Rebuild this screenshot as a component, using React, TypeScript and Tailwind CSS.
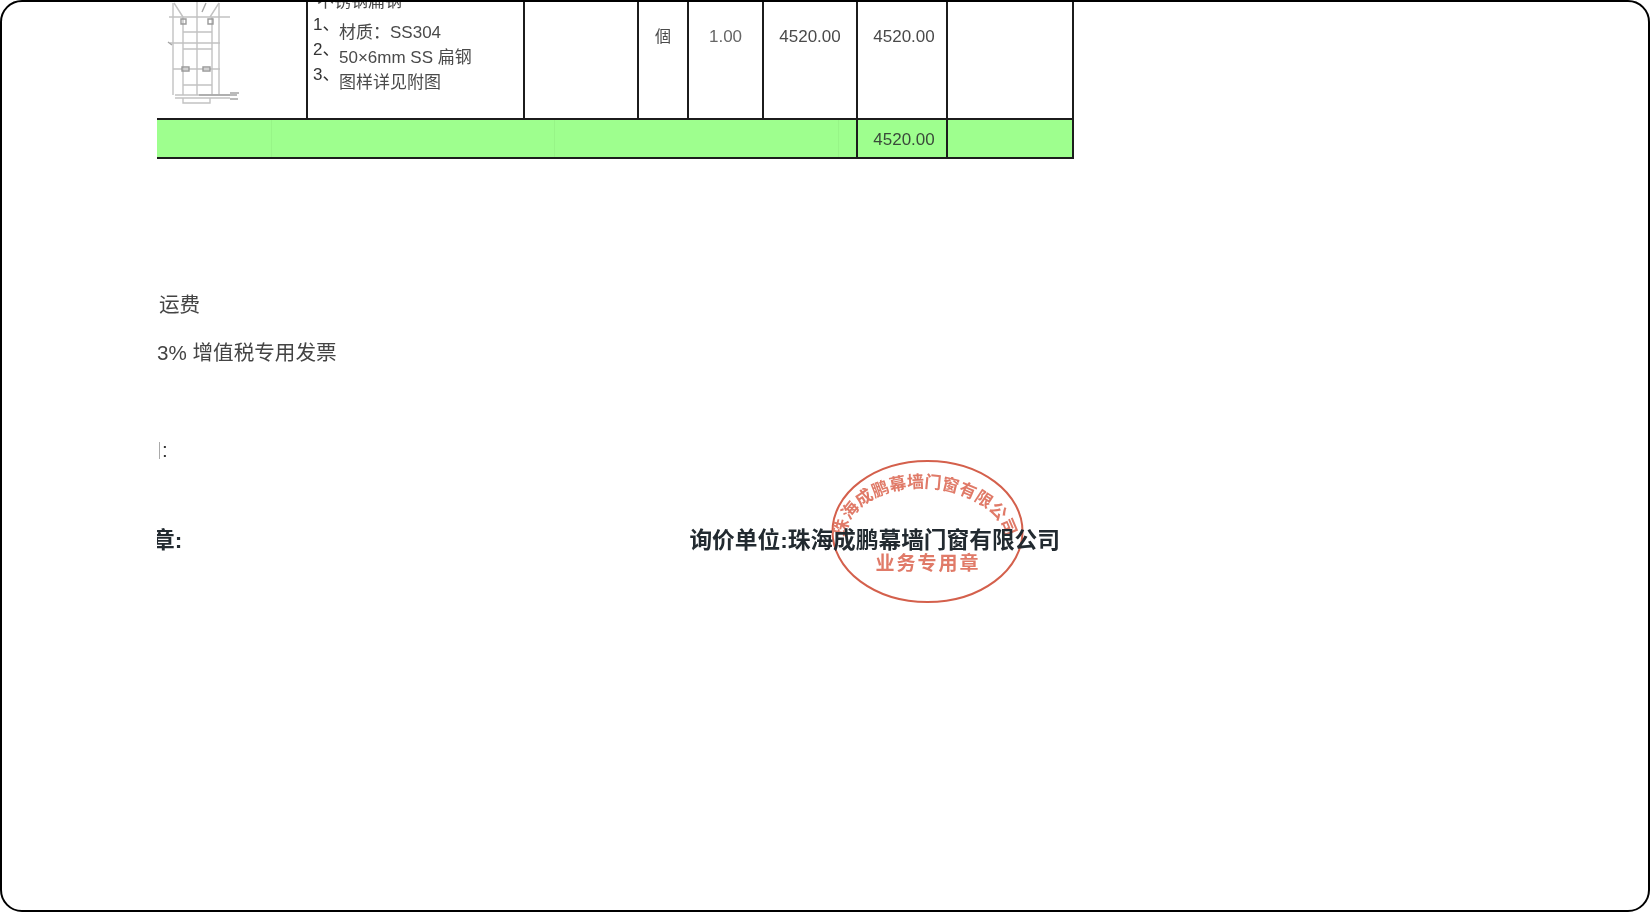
import React from 'react';

const FONT = '[font-family:"Liberation_Sans","Noto_Sans_CJK_SC",sans-serif]';

const specs = ['材质：SS304', '50×6mm SS 扁钢', '图样详见附图'];

// the ladder drawing in the first cell of the quote
const LadderDrawing = () => (
  <svg width="140" height="112" viewBox="0 0 140 112" fill="none" stroke="#c2c2c2" strokeWidth="1.4" className="blur-[0.6px]">
    <path d="M10 17H71M11 43H61M14 69H61M16 95H71M16 98H71M24 98V103H51V98" />
    <path d="M14 3V95M24 17V95M38 0V95M53 17V95M60 3V95" />
    <path d="M15 3L24 17M60 3L51 17M24 32H53M24 49H53M24 85H53" />
    <path d="M22 19H27V24H22ZM49 19H54V24H49ZM23 67H30V71H23ZM44 67H51V71H44Z" stroke="#9a9a9a" />
    <path d="M40 95H78M71 93H80M71 99H79M9 42L13 45M43 12L47 3" stroke="#a5a5a5" />
  </svg>
);

const Stamp = () => (
  <svg width="200" height="150" viewBox="0 0 200 150" className="absolute left-[670px] top-[-69px] blur-[0.4px]">
    <ellipse cx="100.5" cy="75.5" rx="95" ry="70.5" fill="none" stroke="#d4604c" strokeWidth="2" />
    <path id="stamp-arc" d="M19 85A80 53 4 0 1 179 85" fill="none" />
    <text fill="#e07a68" fontSize="17" fontFamily='"Noto Sans CJK SC",sans-serif'>
      <textPath href="#stamp-arc" startOffset="50%" textAnchor="middle">
        珠海成鹏幕墙门窗有限公司
      </textPath>
    </text>
    <text x="101" y="114" fill="#e07a68" fontSize="19" letterSpacing="2" textAnchor="middle" fontFamily='"Noto Sans CJK SC",sans-serif'>
      业务专用章
    </text>
  </svg>
);

const App: React.FC = () => {
  return (
    <div className={`h-screen overflow-hidden rounded-[22px] border-2 border-black bg-white ${FONT}`}>
      <div className="ml-[155px] w-[917px] overflow-hidden pb-[80px] blur-[0.35px]">
        {/* quote table, its top is scrolled out of view */}
        <div className="-mt-[20px] border-b-2 border-r-2 border-[#1c1c1c] text-[#4a4a4a]">
          <div className="grid h-[138px] grid-cols-[149px_217px_114px_50px_75px_94px_90px_1fr] border-b-2 border-[#1c1c1c]">
            <div className="flex items-end pb-[6px] pl-[2px]">
              <LadderDrawing />
            </div>
            <div className="border-l-2 border-[#1c1c1c] pl-[5px] text-[17px]">
              <div className="ml-[4px] mt-[8px] h-[30px] leading-[24px]">不锈钢扁钢</div>
              {specs.map((spec, i) => (
                <div key={spec} className="flex h-[25px] items-center">
                  <span className="w-[26px] -translate-y-[8px] text-[#333]">{i + 1}、</span>
                  <span>{spec}</span>
                </div>
              ))}
            </div>
            <div className="border-l-2 border-[#1c1c1c]" />
            <div className="flex items-center justify-center border-l-2 border-[#1c1c1c] pb-[27px] text-[16px]">個</div>
            <div className="flex items-center justify-center border-l-2 border-[#1c1c1c] pb-[27px] text-[17px] text-[#666]">1.00</div>
            <div className="flex items-center justify-center border-l-2 border-[#1c1c1c] pb-[27px] text-[17px]">4520.00</div>
            <div className="flex items-center justify-center border-l-2 border-[#1c1c1c] pb-[27px] pl-[4px] text-[17px]">4520.00</div>
            <div className="border-l-2 border-[#1c1c1c]" />
          </div>
          <div className="flex h-[37px] bg-[#9eff8e] text-[17px]">
            <div className="w-[115px] border-r border-[#97f587]" />
            <div className="w-[283px] border-r border-[#97f587]" />
            <div className="w-[284px] border-r border-[#97f587]" />
            <div className="w-[17px]" />
            <div className="flex w-[90px] items-center justify-center border-l-2 border-[#1c1c1c] pl-[4px] pt-[2px] text-[#3a4a3a]">4520.00</div>
            <div className="flex-1 border-l-2 border-[#1c1c1c]" />
          </div>
        </div>

        {/* terms */}
        <div className="mt-[131px] pl-[3px] text-[20.6px] text-[#444]">
          <div className="-ml-[1px] h-[30px] leading-[30px]">运费</div>
          <div className="mt-[18px] -ml-[3px] h-[30px] leading-[30px]">3% 增值税专用发票</div>
          <div className="mt-[67px] flex h-[30px] items-center -ml-[1px]">
            <span className="mr-[2px] h-[17px] border-l border-[#aaa]" />
            <span className="text-[#333]">:</span>
          </div>
        </div>

        {/* signatures */}
        <div className="relative mt-[60px] flex h-[30px] items-center justify-between pr-[14px] text-[22.7px] font-bold leading-[30px] text-[#222a30]">
          <span className="-ml-[5px] w-[30px] overflow-hidden whitespace-nowrap">章:</span>
          <Stamp />
          <span className="relative">询价单位:珠海成鹏幕墙门窗有限公司</span>
        </div>
      </div>
    </div>
  );
};

export default App;
